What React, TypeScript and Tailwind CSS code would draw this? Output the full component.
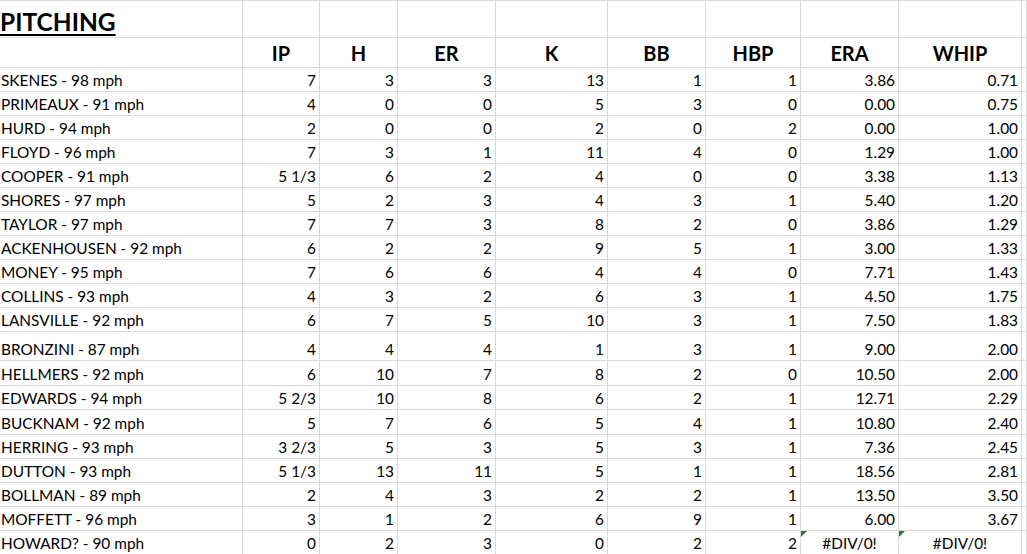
import React from "react";

type Row = {
  name: string;
  stats: string[];
  h: string;
};

const colWidths = [
  "w-[243px]",
  "w-[77px]",
  "w-[78px]",
  "w-[98px]",
  "w-[112px]",
  "w-[98px]",
  "w-[95px]",
  "w-[98px]",
  "w-[123px]",
];

const headers = ["IP", "H", "ER", "K", "BB", "HBP", "ERA", "WHIP"];

const rows: Row[] = [
  { name: "SKENES - 98 mph", stats: ["7", "3", "3", "13", "1", "1", "3.86", "0.71"], h: "h-[24px]" },
  { name: "PRIMEAUX - 91 mph", stats: ["4", "0", "0", "5", "3", "0", "0.00", "0.75"], h: "h-[24px]" },
  { name: "HURD - 94 mph", stats: ["2", "0", "0", "2", "0", "2", "0.00", "1.00"], h: "h-[24px]" },
  { name: "FLOYD - 96 mph", stats: ["7", "3", "1", "11", "4", "0", "1.29", "1.00"], h: "h-[24px]" },
  { name: "COOPER - 91 mph", stats: ["5 1/3", "6", "2", "4", "0", "0", "3.38", "1.13"], h: "h-[24px]" },
  { name: "SHORES - 97 mph", stats: ["5", "2", "3", "4", "3", "1", "5.40", "1.20"], h: "h-[24px]" },
  { name: "TAYLOR - 97 mph", stats: ["7", "7", "3", "8", "2", "0", "3.86", "1.29"], h: "h-[24px]" },
  { name: "ACKENHOUSEN - 92 mph", stats: ["6", "2", "2", "9", "5", "1", "3.00", "1.33"], h: "h-[24px]" },
  { name: "MONEY - 95 mph", stats: ["7", "6", "6", "4", "4", "0", "7.71", "1.43"], h: "h-[24px]" },
  { name: "COLLINS - 93 mph", stats: ["4", "3", "2", "6", "3", "1", "4.50", "1.75"], h: "h-[24px]" },
  { name: "LANSVILLE - 92 mph", stats: ["6", "7", "5", "10", "3", "1", "7.50", "1.83"], h: "h-[24px]" },
  { name: "BRONZINI - 87 mph", stats: ["4", "4", "4", "1", "3", "1", "9.00", "2.00"], h: "h-[29px]" },
  { name: "HELLMERS - 92 mph", stats: ["6", "10", "7", "8", "2", "0", "10.50", "2.00"], h: "h-[25px]" },
  { name: "EDWARDS - 94 mph", stats: ["5 2/3", "10", "8", "6", "2", "1", "12.71", "2.29"], h: "h-[24px]" },
  { name: "BUCKNAM - 92 mph", stats: ["5", "7", "6", "5", "4", "1", "10.80", "2.40"], h: "h-[25px]" },
  { name: "HERRING - 93 mph", stats: ["3 2/3", "5", "3", "5", "3", "1", "7.36", "2.45"], h: "h-[24px]" },
  { name: "DUTTON - 93 mph", stats: ["5 1/3", "13", "11", "5", "1", "1", "18.56", "2.81"], h: "h-[24px]" },
  { name: "BOLLMAN - 89 mph", stats: ["2", "4", "3", "2", "2", "1", "13.50", "3.50"], h: "h-[24px]" },
  { name: "MOFFETT - 96 mph", stats: ["3", "1", "2", "6", "9", "1", "6.00", "3.67"], h: "h-[24px]" },
  { name: "HOWARD? - 90 mph", stats: ["0", "2", "3", "0", "2", "2", "#DIV/0!", "#DIV/0!"], h: "h-[24px]" },
];

const cell = "shrink-0 border-r border-b border-[#dadada] flex items-end";

const ErrorFlag = () => (
  <span className="absolute left-0 top-0 w-0 h-0 border-t-[6px] border-r-[6px] border-t-[#1e7b34] border-r-transparent" />
);

export default function App() {
  return (
    <div
      className="w-[1027px] h-[554px] overflow-hidden bg-white text-black border-t border-[#dadada]"
      style={{ fontFamily: "Lato, 'Open Sans', sans-serif" }}
    >
      {/* title row */}
      <div className="flex h-[37px]">
        <div className={`${cell} ${colWidths[0]} pb-[3px]`}>
          <span className="text-[24.5px] font-bold leading-none underline underline-offset-[3px] decoration-2">
            PITCHING
          </span>
        </div>
        {colWidths.slice(1).map((w, i) => (
          <div key={i} className={`${cell} ${w}`} />
        ))}
        <div className={`${cell} flex-1`} />
      </div>

      {/* header row */}
      <div className="flex h-[30px]">
        <div className={`${cell} ${colWidths[0]}`} />
        {headers.map((hd, i) => (
          <div key={hd} className={`${cell} ${colWidths[i + 1]} justify-center pb-[4px]`}>
            <span className="text-[20px] font-bold leading-none">{hd}</span>
          </div>
        ))}
        <div className={`${cell} flex-1`} />
      </div>

      {rows.map((r) => (
        <div key={r.name} className={`flex ${r.h}`}>
          <div className={`${cell} ${colWidths[0]} pb-[3px] pl-[1px]`}>
            <span className="text-[15.4px] leading-none">{r.name}</span>
          </div>
          {r.stats.map((s, i) => {
            const isErr = s.startsWith("#");
            return (
              <div
                key={i}
                className={`${cell} ${colWidths[i + 1]} relative pb-[3px] ${isErr ? "justify-center" : "justify-end pr-[3px]"}`}
              >
                {isErr && <ErrorFlag />}
                <span className="text-[15.4px] leading-none">{s}</span>
              </div>
            );
          })}
          <div className={`${cell} flex-1`} />
        </div>
      ))}
    </div>
  );
}
